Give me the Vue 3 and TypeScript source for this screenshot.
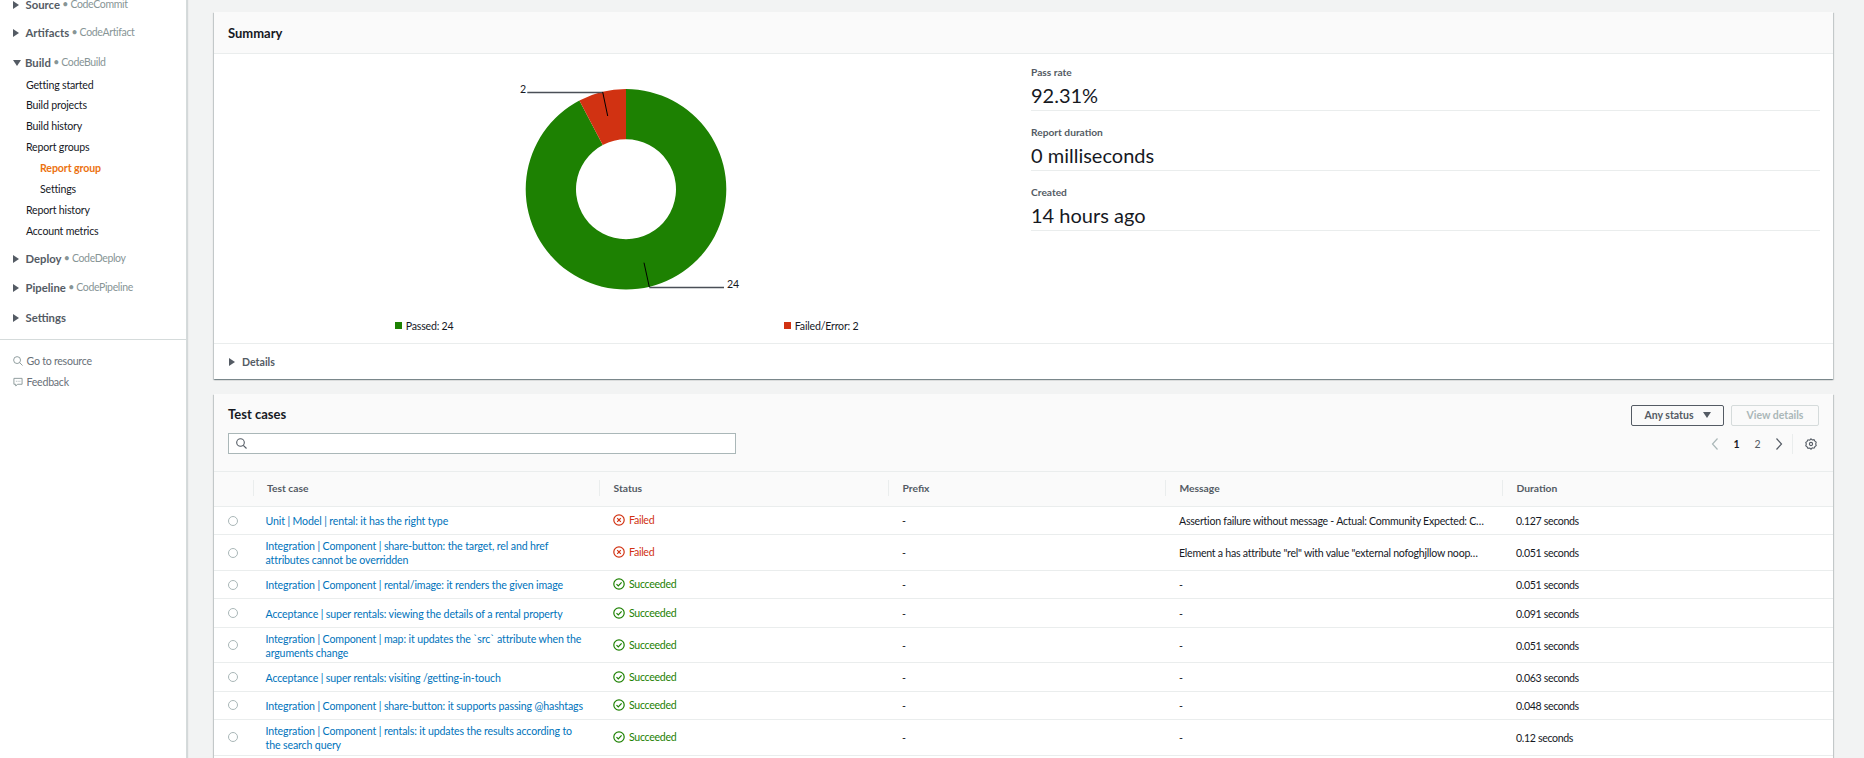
<script setup lang="ts">
interface Row { name: string[]; ok: boolean; msg: string; dur: string; tall?: boolean }
const rows: Row[] = [
  { name: ['Unit | Model | rental: it has the right type'], ok: false, msg: 'Assertion failure without message - Actual: Community Expected: C…', dur: '0.127 seconds' },
  { name: ['Integration | Component | share-button: the target, rel and href', 'attributes cannot be overridden'], ok: false, msg: 'Element a has attribute "rel" with value "external nofoghjllow noop…', dur: '0.051 seconds', tall: true },
  { name: ['Integration | Component | rental/image: it renders the given image'], ok: true, msg: '-', dur: '0.051 seconds' },
  { name: ['Acceptance | super rentals: viewing the details of a rental property'], ok: true, msg: '-', dur: '0.091 seconds' },
  { name: ['Integration | Component | map: it updates the `src` attribute when the', 'arguments change'], ok: true, msg: '-', dur: '0.051 seconds', tall: true },
  { name: ['Acceptance | super rentals: visiting /getting-in-touch'], ok: true, msg: '-', dur: '0.063 seconds' },
  { name: ['Integration | Component | share-button: it supports passing @hashtags'], ok: true, msg: '-', dur: '0.048 seconds' },
  { name: ['Integration | Component | rentals: it updates the results according to', 'the search query'], ok: true, msg: '-', dur: '0.12 seconds', tall: true },
]
const heads = ['Test case', 'Status', 'Prefix', 'Message', 'Duration']
const stats = [
  { label: 'Pass rate', value: '92.31%' },
  { label: 'Report duration', value: '0 milliseconds' },
  { label: 'Created', value: '14 hours ago' },
]
const build = ['Getting started', 'Build projects', 'Build history', 'Report groups']

const cx = 626, cy = 189.3, R = 100.3, r = 50
const split = (2 / 26) * Math.PI * 2
const pt = (rad: number, a: number) => `${(cx + rad * Math.sin(a)).toFixed(2)} ${(cy - rad * Math.cos(a)).toFixed(2)}`
const redPath = `M${pt(R, 0)} A${R} ${R} 0 0 0 ${pt(R, -split)} L${pt(r, -split)} A${r} ${r} 0 0 1 ${pt(r, 0)} Z`
const greenPath = `M${pt(R, 0)} A${R} ${R} 0 1 1 ${pt(R, -split)} L${pt(r, -split)} A${r} ${r} 0 1 0 ${pt(r, 0)} Z`
</script>

<template>
  <div class="page">
    <aside class="side">
      <div class="sec first"><i class="tri"></i><b>Source</b><span class="svc"> • CodeCommit</span></div>
      <div class="sec art"><i class="tri"></i><b>Artifacts</b><span class="svc"> • CodeArtifact</span></div>
      <div class="sec bld"><i class="tri down"></i><b>Build</b><span class="svc"> • CodeBuild</span></div>
      <ul class="items">
        <li v-for="b in build" :key="b">{{ b }}</li>
        <li class="sub active">Report group</li>
        <li class="sub">Settings</li>
        <li>Report history</li>
        <li>Account metrics</li>
      </ul>
      <div class="sec dep"><i class="tri"></i><b>Deploy</b><span class="svc"> • CodeDeploy</span></div>
      <div class="sec pipe"><i class="tri"></i><b>Pipeline</b><span class="svc"> • CodePipeline</span></div>
      <div class="sec last"><i class="tri"></i><b>Settings</b></div>
      <div class="side-foot">
        <div class="foot-row">
          <svg width="10" height="10" viewBox="0 0 11 11" fill="none" stroke="#879596" stroke-width="1"><circle cx="4.5" cy="4.5" r="3.8"/><path d="M7.3 7.3l3.2 3.2"/></svg>
          <span>Go to resource</span>
        </div>
        <div class="foot-row">
          <svg width="10" height="10" viewBox="0 0 11 11" fill="none" stroke="#879596" stroke-width="1"><path d="M1 1.5h9v6.5H5L3 10V8H1z"/><path d="M3.2 4.700h.8M5.200 4.700h.8M7.200 4.700h.8"/></svg>
          <span>Feedback</span>
        </div>
      </div>
    </aside>

    <main class="main">
      <section class="card summary">
        <h2 class="card-head">Summary</h2>
        <div class="sum-body">
          <svg class="chart" width="803" height="289" viewBox="214 54 803 289">
            <path :d="greenPath" fill="#1d8102"/>
            <path :d="redPath" fill="#d13212"/>
            <path d="M527.3 92.500H602.700" stroke="#4a4f57" stroke-width="1.300"/>
            <path d="M602.700 92L607.700 116" stroke="#000" stroke-width="1"/>
            <path d="M649.300 287.500H724" stroke="#4a4f57" stroke-width="1.300"/>
            <path d="M644 262.700L649.300 287" stroke="#000" stroke-width="1"/>
            <text x="520" y="92.500" class="lbl">2</text>
            <text x="727" y="287.500" class="lbl">24</text>
            <rect x="395" y="322" width="7" height="7" fill="#1d8102"/>
            <text x="405.700" y="329.500" class="lbl">Passed: 24</text>
            <rect x="784" y="322" width="7" height="7" fill="#d13212"/>
            <text x="794.800" y="329.500" class="lbl">Failed/Error: 2</text>
          </svg>
          <div class="stats">
            <div v-for="s in stats" :key="s.label" class="stat">
              <div class="stat-label">{{ s.label }}</div>
              <div class="stat-value">{{ s.value }}</div>
            </div>
          </div>
        </div>
        <div class="details"><i class="tri"></i><b>Details</b></div>
      </section>

      <section class="card cases">
        <div class="cases-head">
          <div class="cases-left">
            <h2 class="cases-title">Test cases</h2>
            <div class="search">
              <svg width="11" height="11" viewBox="0 0 11 11" fill="none" stroke="#545b64" stroke-width="1.100"><circle cx="4.500" cy="4.500" r="3.800"/><path d="M7.300 7.300l3.200 3.200"/></svg>
            </div>
          </div>
          <div class="cases-right">
            <div class="btns">
              <div class="btn primary">Any status<i class="caret"></i></div>
              <div class="btn disabled">View details</div>
            </div>
            <div class="pager">
              <svg class="prev" width="8" height="12" viewBox="0 0 8 12" fill="none" stroke="#aab7b8" stroke-width="1.200"><path d="M6.500 .5L1.500 6l5 5.500"/></svg>
              <b class="pg">1</b>
              <span class="pg">2</span>
              <svg class="next" width="8" height="12" viewBox="0 0 8 12" fill="none" stroke="#545b64" stroke-width="1.200"><path d="M1.500 .5l5 5.500-5 5.500"/></svg>
              <i class="vsep"></i>
              <svg class="gear" width="12" height="12" viewBox="0 0 12 12" fill="none" stroke="#545b64" stroke-width="1.100"><circle cx="6" cy="6" r="1.600"/><path d="M6 .8l1.300 1.200 1.700-.4 .9 1.500 1.300 1.100-.5 1.800 .5 1.600-1.300 1.100-.9 1.500-1.700-.4L6 11.200 4.700 10l-1.700 .4-.9-1.500L.8 7.800l.5-1.800-.5-1.600 1.300-1.100 .9-1.500 1.700 .4z"/></svg>
            </div>
          </div>
        </div>

        <table class="tbl">
          <colgroup>
            <col class="c0" /><col class="c1" /><col class="c2" /><col class="c3" /><col class="c4" /><col />
          </colgroup>
          <thead>
            <tr>
              <th></th>
              <th v-for="h in heads" :key="h"><span class="th-in">{{ h }}</span></th>
            </tr>
          </thead>
          <tbody>
            <tr v-for="(row, i) in rows" :key="i" :class="{ tall: row.tall }">
              <td class="sel"><i class="radio"></i></td>
              <td class="name"><a v-for="line in row.name" :key="line" class="link">{{ line }}</a></td>
              <td>
                <span class="status" :class="row.ok ? 'ok' : 'bad'">
                  <svg width="12" height="12" viewBox="0 0 12 12" fill="none" stroke="currentColor" stroke-width="1.200">
                    <circle cx="6" cy="6" r="5.200"/>
                    <path v-if="row.ok" d="M3.500 6.200l1.800 1.800 3.300-3.600"/>
                    <path v-else d="M4.200 4.200l3.600 3.600M7.800 4.200l-3.600 3.600"/>
                  </svg>
                  <span class="st-text">{{ row.ok ? 'Succeeded' : 'Failed' }}</span>
                </span>
              </td>
              <td>-</td>
              <td class="msg">{{ row.msg }}</td>
              <td class="dur">{{ row.dur }}</td>
            </tr>
          </tbody>
        </table>
      </section>
    </main>
  </div>
</template>

<style>
html, body { margin: 0; overflow: hidden; background: #f2f3f3; }
</style>

<style scoped>
.page {
  display: flex;
  width: 1864px;
  height: 758px;
  overflow: hidden;
  background: #f2f3f3;
  font-family: Lato, "Liberation Sans", sans-serif;
  font-size: 10.600px;
  color: #16191f;
}
.side {
  width: 186px;
  flex: none;
  background: #fff;
  border-right: 1px solid #d5dbdb;
  box-shadow: 1px 0 1px rgba(0, 28, 36, .12);
  line-height: 21px;
}
.sec { height: 21px; padding-left: 13px; color: #545b64; white-space: nowrap; display: flex; align-items: center; }
.sec b { font-weight: 700; font-size: 11.300px; }
.svc { color: #879596; white-space: pre; font-size: 10.500px; letter-spacing: -.35px; }
.first { margin-top: -6.500px; }
.art { margin-top: 7.500px; }
.bld { margin-top: 9px; }
.dep { margin-top: 6px; }
.pipe { margin-top: 8px; }
.last { margin-top: 9px; }
.tri {
  display: block;
  width: 0;
  height: 0;
  border-style: solid;
  border-width: 4.500px 0 4.500px 6.500px;
  border-color: transparent transparent transparent #545b64;
  margin: 1px 6.500px 0 0;
}
.tri.down { border-width: 6.500px 4.500px 0; border-color: #545b64 transparent transparent; margin-right: 4px; }
.items { list-style: none; margin: 1.500px 0 0; padding: 0 0 0 26px; letter-spacing: -.19px; }
.items li { height: 20.900px; line-height: 20.900px; white-space: nowrap; }
.items li.sub { padding-left: 14px; }
.items li.active { color: #ec7211; font-weight: 700; letter-spacing: -.1px; }
.side-foot { margin-top: 11px; border-top: 1px solid #d5dbdb; padding: 11px 0 0 13px; color: #687078; letter-spacing: -.25px; }
.foot-row { height: 21px; display: flex; align-items: center; gap: 3.500px; }

.main { flex: 1; min-width: 0; padding: 12px 31px 0 27px; }
.card {
  background: #fff;
  box-shadow: 0 1px 1px 0 rgba(0, 28, 36, .3), 1px 1px 1px 0 rgba(0, 28, 36, .15), -1px 1px 1px 0 rgba(0, 28, 36, .15);
}
.card-head {
  margin: 0;
  height: 41px;
  line-height: 43px;
  padding-left: 14px;
  font-size: 13px;
  font-weight: 700;
  background: #fafafa;
  border-bottom: 1px solid #eaeded;
}
.sum-body { display: flex; height: 289px; }
.chart { flex: none; display: block; }
.lbl { font-size: 10.600px; letter-spacing: -.2px; fill: #16191f; }
.stats { flex: 1; padding: 9.500px 13px 0 14px; }
.stat { height: 46px; margin-bottom: 13px; border-bottom: 1px solid #eaeded; }
.stat-label { height: 16px; line-height: 16px; font-size: 10.200px; font-weight: 700; color: #545b64; margin-bottom: 2px; }
.stat-value { height: 28px; line-height: 26px; font-size: 20px; color: #16191f; }
.details {
  height: 35px;
  border-top: 1px solid #eaeded;
  padding-left: 15px;
  display: flex;
  align-items: center;
  color: #545b64;
}
.details .tri { margin-right: 7px; }
.summary { margin-bottom: 14.500px; }

.cases { padding-bottom: 40px; }
.cases-head {
  display: flex;
  justify-content: space-between;
  height: 78px;
  box-sizing: border-box;
  padding: 10px 14px 0;
  background: #fafafa;
  border-bottom: 1px solid #eaeded;
}
.cases-title { margin: 0 0 8px; height: 21px; line-height: 21px; font-size: 13px; font-weight: 700; }
.search {
  width: 508px;
  height: 21px;
  box-sizing: border-box;
  border: 1px solid #aab7b8;
  background: #fff;
  display: flex;
  align-items: center;
  padding-left: 7px;
}
.cases-right { display: flex; flex-direction: column; align-items: flex-end; padding-top: 1px; }
.btns { display: flex; gap: 7px; }
.btn {
  height: 21px;
  box-sizing: border-box;
  border: 1px solid #545b64;
  border-radius: 2px;
  font-weight: 700;
  font-size: 10.500px;
  color: #545b64;
  display: flex;
  align-items: center;
  justify-content: center;
}
.btn.primary { width: 93px; }
.btn.disabled { width: 88px; border-color: #d5dbdb; color: #aab7b8; }
.caret {
  display: block;
  width: 0;
  height: 0;
  border-style: solid;
  border-width: 6px 4px 0;
  border-color: #545b64 transparent transparent;
  margin-left: 9px;
}
.pager { display: flex; align-items: center; height: 14px; margin-top: 11px; color: #545b64; }
.pager .pg { width: 21px; text-align: center; font-size: 10.500px; }
.pager b.pg { color: #16191f; }
.prev { margin-right: 7px; }
.next { margin-left: 7px; }
.vsep { display: block; width: 1px; height: 20px; background: #eaeded; margin: 0 12px 0 9px; }
.gear { margin-right: 2px; }

.tbl { width: 100%; table-layout: fixed; border-collapse: collapse; }
.c0 { width: 38.500px; }
.c1 { width: 346.500px; }
.c2 { width: 289px; }
.c3 { width: 277px; }
.c4 { width: 337px; }
.tbl th {
  height: 35px;
  padding: 0 0 2px;
  box-sizing: border-box;
  background: #fafafa;
  text-align: left;
  font-weight: 700;
  font-size: 10.300px;
  color: #545b64;
  border-bottom: 1px solid #eaeded;
}
.th-in { display: block; border-left: 1px solid #eaeded; padding-left: 13.500px; line-height: 16px; }
.tbl td { height: 28.400px; padding: 1px 0 0 14px; box-sizing: border-box; border-bottom: 1px solid #eaeded; white-space: nowrap; }
.tbl tr.tall td { height: 35.600px; }
.tbl td.sel { padding: 0 0 0 14px; line-height: 0; }
.radio { display: inline-block; width: 10px; height: 10px; box-sizing: border-box; border: 1px solid #aab7b8; border-radius: 50%; }
.link { display: block; color: #0073bb; line-height: 14px; letter-spacing: -.13px; }
.tbl td.name { padding-left: 13px; }
.tbl td.msg { letter-spacing: -.25px; }
.tbl td.dur { letter-spacing: -.35px; }
.status { display: inline-flex; align-items: center; gap: 4px; }
.st-text { letter-spacing: -.3px; }
.status.ok { color: #1d8102; }
.status.bad { color: #d13212; }
</style>
